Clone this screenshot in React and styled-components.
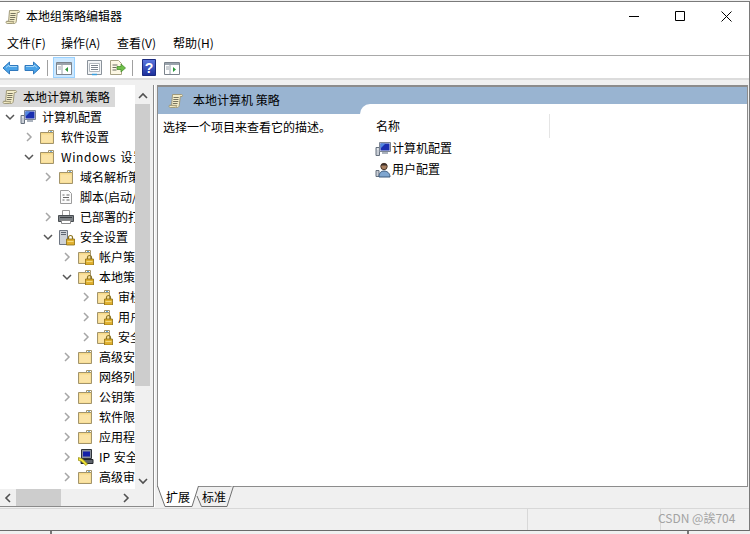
import styled, { createGlobalStyle } from "styled-components";

const GlobalStyle = createGlobalStyle`
  html, body { margin: 0; padding: 0; background: #f0f0f0; }
  * { box-sizing: border-box; }
`;

const treeRows = [
  { level: 1, arrow: "down", icon: "computer", text: "计算机配置" },
  { level: 2, arrow: "right", icon: "folder", text: "软件设置" },
  { level: 2, arrow: "down", icon: "folder", text: "Windows 设置", wide: true },
  { level: 3, arrow: "right", icon: "folder", text: "域名解析策略" },
  { level: 3, icon: "script", text: "脚本(启动/关机)" },
  { level: 3, arrow: "right", icon: "printer", text: "已部署的打印机" },
  { level: 3, arrow: "down", icon: "security", text: "安全设置" },
  { level: 4, arrow: "right", icon: "lock", text: "帐户策略" },
  { level: 4, arrow: "down", icon: "lock", text: "本地策略" },
  { level: 5, arrow: "right", icon: "lock", text: "审核策略" },
  { level: 5, arrow: "right", icon: "lock", text: "用户权限" },
  { level: 5, arrow: "right", icon: "lock", text: "安全选项" },
  { level: 4, arrow: "right", icon: "folder", text: "高级安全" },
  { level: 4, icon: "folder", text: "网络列表" },
  { level: 4, arrow: "right", icon: "folder", text: "公钥策略" },
  { level: 4, arrow: "right", icon: "folder", text: "软件限制" },
  { level: 4, arrow: "right", icon: "folder", text: "应用程序" },
  { level: 4, arrow: "right", icon: "ipsec", text: "IP 安全" },
  { level: 4, arrow: "right", icon: "folder", text: "高级审核" },
];

function ScrollIcon() {
  return (
    <svg width="16" height="16" viewBox="0 0 16 16">
      <path d="M4.5 1.5h9c1 0 1.3 1.2.6 2h-1.8l-1 8.5c-.1 1.2-.7 2.5-1.8 2.5H2.2c-1.2 0-1.6-1.6-.7-2.2H3.6z" fill="#f4edc9" stroke="#a09a7c" />
      <path d="M5.5 4.5h5.2M5.3 6.5h5.2M5.1 8.5h5.2M4.9 10.5h4.6" stroke="#77745f" />
      <path d="M1.5 12.4h7.3c-.5.5-.6 1.3-.4 2" fill="#e6dcae" stroke="#a09a7c" />
    </svg>
  );
}

function FolderIcon() {
  return (
    <svg width="16" height="16" viewBox="0 0 16 16">
      <path d="M1.5 3.5h13v11h-13z" fill="#f6d98a" stroke="#a3946a" />
      <path d="M2.5 5.5h11v8h-11z" fill="#fbe4a6" />
      <path d="M9.5 1.5h5v2h-5z" fill="#fff" stroke="#a3946a" />
      <path d="M11 2.5h2" stroke="#7db3d8" />
    </svg>
  );
}

function LockBadge() {
  return (
    <g>
      <path d="M10.5 10V8.5a2 2 0 0 1 4 0V10" fill="none" stroke="#8c7420" strokeWidth="1.2" />
      <path d="M8.5 10h8v6h-8z" fill="#e0b030" stroke="#8c6d10" strokeWidth=".8" />
      <path d="M9.5 12.5h6" stroke="#f5dc80" />
    </g>
  );
}

function LockFolderIcon() {
  return (
    <svg width="17" height="16" viewBox="0 0 17 16">
      <path d="M1.5 3.5h12v11h-12z" fill="#f6d98a" stroke="#a3946a" />
      <path d="M2.5 5.5h10v8h-10z" fill="#fbe4a6" />
      <path d="M8.5 1.5h5v2h-5z" fill="#fff" stroke="#a3946a" />
      <path d="M10 2.5h2" stroke="#5ea6d8" />
      <LockBadge />
    </svg>
  );
}

function ComputerIcon() {
  return (
    <svg width="16" height="16" viewBox="0 0 16 16">
      <path d="M1 6.5h3.5v8H1z" fill="#c9ced6" stroke="#66707e" />
      <path d="M4.5 1.5h11v9h-11z" fill="#dfe4ea" stroke="#7d8694" />
      <path d="M5.5 2.5h9v7h-9z" fill="#1a2fb0" />
      <path d="M5.5 2.5h5l-5 5z" fill="#4f87e0" />
      <path d="M7 11h6v2H7z" fill="#aab2bd" />
      <path d="M2 8h1.5" stroke="#fff" />
    </svg>
  );
}

function UserIcon() {
  return (
    <svg width="16" height="16" viewBox="0 0 16 16">
      <path d="M1 8.5h3v6H1z" fill="#c9ced6" stroke="#66707e" />
      <circle cx="9" cy="4.5" r="3.2" fill="#a87f60" stroke="#4d3a2d" />
      <path d="M5.5 3.5c1-2.5 6-2.5 7 0z" fill="#3c302a" />
      <path d="M4 15c0-4 2-6 5-6s6 2 6 6z" fill="#7fa6d0" stroke="#3d5a7c" />
    </svg>
  );
}

function SheetIcon() {
  return (
    <svg width="16" height="16" viewBox="0 0 16 16">
      <path d="M2.5 1.5h8l3 3v10h-11z" fill="#fbfbfb" stroke="#9c9c9c" />
      <path d="M4.5 6h2M8.5 6h3M5 8.5h6M4.5 11h2M8.5 11h3" stroke="#666" />
    </svg>
  );
}

function PrinterIcon() {
  return (
    <svg width="16" height="16" viewBox="0 0 16 16">
      <path d="M4.5 1.5h7v5h-7z" fill="#fff" stroke="#9a9a9a" />
      <path d="M.5 6.5h15v6H.5z" fill="#7d8286" stroke="#4a4f53" />
      <path d="M2 8.5h12" stroke="#3a3e42" />
      <path d="M3.5 11.5h9v3h-9z" fill="#fff" stroke="#8a8a8a" />
    </svg>
  );
}

function SecurityIcon() {
  return (
    <svg width="17" height="17" viewBox="0 0 17 17">
      <path d="M1.5 1.5h8v14h-8z" fill="#cfd3d8" stroke="#6e7682" />
      <path d="M3 3.5h5M3 5.5h5" stroke="#5e6672" />
      <LockBadge />
    </svg>
  );
}

function IpsecIcon() {
  return (
    <svg width="17" height="17" viewBox="0 0 17 17">
      <path d="M4.5 .5h10v9h-10z" fill="#8b919b" stroke="#30343a" />
      <path d="M6 2.5h7v5H6z" fill="#1421a8" />
      <path d="M4 10.5h12v4H4z" fill="#5f646c" stroke="#25282d" />
      <path d="M1.5 8.5l4 1.5 5 5-1.5 1.5-5-4.5-2.5-.5z" fill="#f6ea3a" stroke="#9a8f14" strokeWidth=".8" />
    </svg>
  );
}

const treeIcons = {
  computer: <ComputerIcon />,
  folder: <FolderIcon />,
  lock: <LockFolderIcon />,
  script: <SheetIcon />,
  printer: <PrinterIcon />,
  security: <SecurityIcon />,
  ipsec: <IpsecIcon />,
};

function Chevron({ dir }) {
  if (dir === "down") {
    return (
      <svg width="10" height="10" viewBox="0 0 10 10">
        <path d="M1 3l4 4 4-4" fill="none" stroke="#555" strokeWidth="1.5" />
      </svg>
    );
  }
  if (dir === "right") {
    return (
      <svg width="10" height="10" viewBox="0 0 10 10">
        <path d="M3 1l4 4-4 4" fill="none" stroke="#a6a6a6" strokeWidth="1.5" />
      </svg>
    );
  }
  return null;
}

function ScrollArrow({ d }) {
  return (
    <svg width="10" height="10" viewBox="0 0 10 10">
      <path d={d} fill="none" stroke="#505050" strokeWidth="1.6" />
    </svg>
  );
}

function NavArrow({ flip }) {
  return (
    <svg width="17" height="14" viewBox="0 0 17 14" style={flip ? { transform: "scaleX(-1)" } : undefined}>
      <path d="M1 7l6.5-6v3.5h8.5v5H7.5V13z" fill="#4aa3e8" stroke="#2f78bd" />
      <path d="M4 6.5l3-2.5v1.5h8" fill="none" stroke="#a6d8fa" />
    </svg>
  );
}

function PaneToggleIcon({ arrow = "#2d9a3a", arrowLeft }) {
  return (
    <svg width="16" height="14" viewBox="0 0 16 14">
      <path d="M.5 1.5h15v12H.5z" fill="#fff" stroke="#7b838c" />
      <path d="M1 2h14v2H1z" fill="#9aa3ac" />
      <path d="M6 4v9" stroke="#9aa3ac" />
      <path d="M2 6h3M2 8h3" stroke="#9aa3ac" />
      <path d={arrowLeft ? "M12 6v5L9 8.5z" : "M9 6v5l3-2.5z"} fill={arrow} />
    </svg>
  );
}

function PropsIcon() {
  return (
    <svg width="15" height="17" viewBox="0 0 15 17">
      <path d="M.5 1.5h14v14H.5z" fill="#f2f4f6" stroke="#8a929a" />
      <path d="M2.5 4.5h10v8h-10z" fill="#fff" stroke="#b3b9bf" />
      <path d="M4 6.5h7M4 8.5h7M4 10.5h7" stroke="#7b838c" />
      <path d="M5 15.5h5" stroke="#39a0e0" strokeWidth="1.5" />
    </svg>
  );
}

function ExportIcon() {
  return (
    <svg width="17" height="17" viewBox="0 0 17 17">
      <path d="M1.5 1.5h8l3 3v11h-11z" fill="#fdf8e4" stroke="#a7a285" />
      <path d="M3.5 6h5M3.5 8.5h4M3.5 11h4" stroke="#6b6b60" />
      <path d="M8 7.5h4V5l4.5 4-4.5 4v-2.5H8z" fill="#6fc04a" stroke="#4a8f2e" strokeWidth=".8" />
    </svg>
  );
}

function HelpIcon() {
  return (
    <svg width="14" height="17" viewBox="0 0 14 17">
      <defs>
        <linearGradient id="helpFill" x1="0" y1="0" x2="0" y2="1">
          <stop offset="0" stopColor="#5c78e0" />
          <stop offset="1" stopColor="#1c2f9a" />
        </linearGradient>
      </defs>
      <path d="M.5 .5h13v16H.5z" fill="url(#helpFill)" stroke="#1b2a80" />
      <text x="7" y="13.5" textAnchor="middle" fontSize="14" fontWeight="700" fontFamily="Liberation Sans, sans-serif" fill="#fff">?</text>
    </svg>
  );
}

export default function App() {
  return (
    <Page>
      <GlobalStyle />
      <Win>
        <TitleBar>
          <ScrollIcon />
          <TitleText>本地组策略编辑器</TitleText>
          <Controls>
            <Ctrl>
              <svg width="11" height="11" viewBox="0 0 11 11">
                <path d="M0 5.5h10" stroke="#000" />
              </svg>
            </Ctrl>
            <Ctrl>
              <svg width="11" height="11" viewBox="0 0 11 11">
                <path d="M.5 .5h9v9h-9z" fill="none" stroke="#000" />
              </svg>
            </Ctrl>
            <Ctrl>
              <svg width="11" height="11" viewBox="0 0 11 11">
                <path d="M.5 .5l10 10M10.5 .5l-10 10" stroke="#000" />
              </svg>
            </Ctrl>
          </Controls>
        </TitleBar>
        <MenuBar>
          <MenuItem $w={38}>文件(F)</MenuItem>
          <MenuItem $w={40}>操作(A)</MenuItem>
          <MenuItem $w={40}>查看(V)</MenuItem>
          <MenuItem $w={40}>帮助(H)</MenuItem>
        </MenuBar>
        <Toolbar>
          <ToolBtn $w={20}><NavArrow /></ToolBtn>
          <ToolBtn $w={24}><NavArrow flip /></ToolBtn>
          <ToolSep />
          <ToolBtn $w={22} $active><PaneToggleIcon arrowLeft /></ToolBtn>
          <ToolGap $w={8} />
          <ToolBtn $w={23}><PropsIcon /></ToolBtn>
          <ToolBtn $w={23}><ExportIcon /></ToolBtn>
          <ToolSep />
          <ToolBtn $w={21}><HelpIcon /></ToolBtn>
          <ToolBtn $w={26}><PaneToggleIcon /></ToolBtn>
        </Toolbar>
        <Main>
          <TreePane>
            <TreeTop>
              <TreeList>
                <RootRow>
                  <ScrollIcon />
                  <RootLabel>本地计算机 策略</RootLabel>
                </RootRow>
                {treeRows.map((row) => (
                  <TreeRow key={row.text} $level={row.level}>
                    <ChevronBox><Chevron dir={row.arrow} /></ChevronBox>
                    <IconBox>{treeIcons[row.icon]}</IconBox>
                    <TreeLabel $wide={row.wide}>{row.text}</TreeLabel>
                  </TreeRow>
                ))}
              </TreeList>
              <VScroll>
                <ScrollBtn><ScrollArrow d="M1 7l4-4 4 4" /></ScrollBtn>
                <VThumb />
                <VTrack />
                <ScrollBtn><ScrollArrow d="M1 3l4 4 4-4" /></ScrollBtn>
              </VScroll>
            </TreeTop>
            <HScroll>
              <HBtn><ScrollArrow d="M7 1L3 5l4 4" /></HBtn>
              <HThumb />
              <HTrack />
              <HBtn><ScrollArrow d="M3 1l4 4-4 4" /></HBtn>
            </HScroll>
          </TreePane>
          <RightColumn>
            <Detail>
              <Banner>
                <ScrollIcon />
                <BannerText>本地计算机 策略</BannerText>
              </Banner>
              <DetailBody>
                <Description>选择一个项目来查看它的描述。</Description>
                <ListPane>
                  <ListHead>
                    <ColumnName>名称</ColumnName>
                  </ListHead>
                  <ListRow>
                    <ComputerIcon />
                    <ListLabel>计算机配置</ListLabel>
                  </ListRow>
                  <ListRow>
                    <UserIcon />
                    <ListLabel>用户配置</ListLabel>
                  </ListRow>
                </ListPane>
              </DetailBody>
            </Detail>
            <Tabs>
              <Tab $w={42} $front>
                <TabShape width="42" height="21" viewBox="0 0 42 21">
                  <path d="M.5 0L8 20.5h27L41.5 0" fill="#fff" stroke="#707070" />
                </TabShape>
                <TabText>扩展</TabText>
              </Tab>
              <Tab $w={35} $pad={5}>
                <TabShape width="35" height="21" viewBox="0 0 35 21">
                  <path d="M-2 10L2.5 20.5H28L34.5 0" fill="#f0f0f0" stroke="#707070" />
                </TabShape>
                <TabText>标准</TabText>
              </Tab>
            </Tabs>
          </RightColumn>
        </Main>
        <StatusBar>
          <StatusCell $w={528} />
          <StatusCell $w={133} />
          <Watermark>CSDN @誒704</Watermark>
        </StatusBar>
      </Win>
      <BottomStrip>
        <StripMark $w={52} />
        <StripMark $w={637} />
      </BottomStrip>
    </Page>
  );
}

const Page = styled.div`
  width: 750px;
  height: 534px;
  overflow: hidden;
  background: #f0f0f0;
  padding-top: 1px;
  font-family: "Noto Sans CJK SC", "Noto Sans", sans-serif;
  font-size: 12px;
  color: #000;
`;

const Win = styled.div`
  width: 750px;
  height: 530px;
  display: flex;
  flex-direction: column;
  border-top: 1px solid #7a7a7a;
  border-right: 1px solid #7a7a7a;
  border-bottom: 1px solid #6a6a6a;
  background: #f0f0f0;
`;

const TitleBar = styled.div`
  height: 31px;
  flex: none;
  display: flex;
  align-items: center;
  padding: 0 0 2px 5px;
  background: #fff;
`;

const TitleText = styled.span`
  margin-left: 5px;
  padding-bottom: 2px;
  font-size: 12px;
`;

const Controls = styled.div`
  margin-left: auto;
  display: flex;
  align-items: center;
`;

const Ctrl = styled.div`
  width: 46px;
  height: 29px;
  display: flex;
  align-items: center;
  justify-content: center;
`;

const MenuBar = styled.div`
  height: 23px;
  flex: none;
  display: flex;
  align-items: center;
  padding-left: 7px;
  gap: 16px;
  background: #fff;
  border-bottom: 1px solid #a9a9a9;
`;

const MenuItem = styled.span`
  width: ${(p) => p.$w}px;
  padding-bottom: 4px;
  white-space: nowrap;
  font-size: 12px;
`;

const Toolbar = styled.div`
  height: 24px;
  flex: none;
  display: flex;
  align-items: center;
  padding-top: 1px;
  background: #fff;
  border-bottom: 2px solid #dcdcdc;
`;

const ToolBtn = styled.div`
  width: ${(p) => p.$w}px;
  height: 21px;
  flex: none;
  display: flex;
  align-items: center;
  justify-content: center;
  background: ${(p) => (p.$active ? "#cce8ff" : "transparent")};
  border: 1px solid ${(p) => (p.$active ? "#99d1ff" : "transparent")};
`;

const ToolSep = styled.div`
  width: 1px;
  height: 16px;
  margin: 0 5px 0 3px;
  flex: none;
  background: #a0a0a0;
`;

const ToolGap = styled.div`
  width: ${(p) => p.$w}px;
  flex: none;
`;

const Main = styled.div`
  flex: 1;
  min-height: 0;
  display: flex;
  padding-top: 5px;
`;

const TreePane = styled.div`
  width: 154px;
  flex: none;
  display: flex;
  flex-direction: column;
  background: #f0f0f0;
  border-right: 1px solid #8a8a8a;
  border-bottom: 1px solid #8a8a8a;
  margin-bottom: 1px;
  box-shadow: 1px 0 0 #fff;
`;

const TreeTop = styled.div`
  flex: 1;
  min-height: 0;
  display: flex;
`;

const TreeList = styled.div`
  width: 135px;
  flex: none;
  overflow: hidden;
  background: #fff;
  padding-top: 2px;
`;

const RootRow = styled.div`
  width: 115px;
  height: 20px;
  display: flex;
  align-items: center;
  padding-left: 2px;
  background: #d9d9d9;
`;

const RootLabel = styled.span`
  margin-left: 5px;
  padding-bottom: 2px;
  white-space: nowrap;
`;

const TreeRow = styled.div`
  height: 20px;
  display: flex;
  align-items: center;
  white-space: nowrap;
  padding-left: ${(p) => 5 + (p.$level - 1) * 19}px;
`;

const ChevronBox = styled.div`
  width: 15px;
  height: 20px;
  flex: none;
  display: flex;
  align-items: center;
`;

const IconBox = styled.div`
  width: 22px;
  height: 20px;
  flex: none;
  display: flex;
  align-items: center;
`;

const TreeLabel = styled.span`
  flex: none;
  padding-bottom: 2px;
  word-spacing: 1px;
  letter-spacing: ${(p) => (p.$wide ? "0.6px" : "0")};
`;

const VScroll = styled.div`
  width: 15px;
  flex: none;
  display: flex;
  flex-direction: column;
  padding-top: 2px;
  background: #f0f0f0;
`;

const ScrollBtn = styled.div`
  height: 17px;
  flex: none;
  display: flex;
  align-items: center;
  justify-content: center;
`;

const VThumb = styled.div`
  height: 282px;
  flex: none;
  background: #cdcdcd;
`;

const VTrack = styled.div`
  flex: 1;
`;

const HScroll = styled.div`
  height: 17px;
  flex: none;
  display: flex;
  align-items: stretch;
  background: #f0f0f0;
`;

const HBtn = styled.div`
  width: 16px;
  flex: none;
  display: flex;
  align-items: center;
  justify-content: center;
`;

const HThumb = styled.div`
  width: 45px;
  flex: none;
  background: #cdcdcd;
`;

const HTrack = styled.div`
  width: 57px;
  flex: none;
`;

const RightColumn = styled.div`
  flex: 1;
  min-width: 0;
  display: flex;
  flex-direction: column;
  padding-left: 3px;
`;

const Detail = styled.div`
  flex: 1;
  min-height: 0;
  display: flex;
  flex-direction: column;
  background: #fff;
  border: 1px solid #8c8c8c;
  border-top-width: 2px;
  margin-right: 1px;
`;

const Banner = styled.div`
  height: 27px;
  flex: none;
  display: flex;
  align-items: center;
  padding-left: 10px;
  background: #99b4d1;
`;

const BannerText = styled.span`
  margin-left: 9px;
  padding-bottom: 3px;
`;

const DetailBody = styled.div`
  flex: 1;
  min-height: 0;
  display: flex;
`;

const Description = styled.div`
  width: 202px;
  flex: none;
  padding: 4px 0 0 5px;
  white-space: nowrap;
`;

const ListPane = styled.div`
  flex: 1;
  margin-top: -10px;
  padding-top: 10px;
  background: #fff;
  border-top-left-radius: 10px;
  z-index: 1;
`;

const ListHead = styled.div`
  height: 24px;
  width: 190px;
  display: flex;
  align-items: center;
  padding-left: 16px;
  border-right: 1px solid #e5e5e5;
`;

const ColumnName = styled.span`
  padding-bottom: 2px;
`;

const ListRow = styled.div`
  height: 21px;
  display: flex;
  align-items: center;
  padding-left: 15px;
`;

const ListLabel = styled.span`
  margin-left: 1px;
  padding-bottom: 2px;
`;

const Tabs = styled.div`
  height: 22px;
  margin-top: -1px;
  flex: none;
  display: flex;
`;

const Tab = styled.div`
  width: ${(p) => p.$w}px;
  height: 21px;
  flex: none;
  position: relative;
  z-index: ${(p) => (p.$front ? 2 : 1)};
  display: flex;
  align-items: center;
  justify-content: center;
  padding-right: ${(p) => p.$pad || 0}px;
`;

const TabShape = styled.svg`
  position: absolute;
  left: 0;
  top: 0;
  overflow: visible;
`;

const TabText = styled.span`
  position: relative;
`;

const StatusBar = styled.div`
  height: 22px;
  flex: none;
  display: flex;
  align-items: center;
  border-top: 1px solid #d8d8d8;
  background: #f0f0f0;
`;

const StatusCell = styled.div`
  width: ${(p) => p.$w}px;
  height: 100%;
  flex: none;
  border-right: 1px solid #d8d8d8;
`;

const Watermark = styled.span`
  margin-left: -3px;
  padding-bottom: 4px;
  white-space: nowrap;
  font-size: 12px;
  color: #a3a3a3;
`;

const BottomStrip = styled.div`
  height: 3px;
  display: flex;
`;

const StripMark = styled.div`
  width: ${(p) => p.$w}px;
  flex: none;
  border-right: 2px solid #777;
`;
